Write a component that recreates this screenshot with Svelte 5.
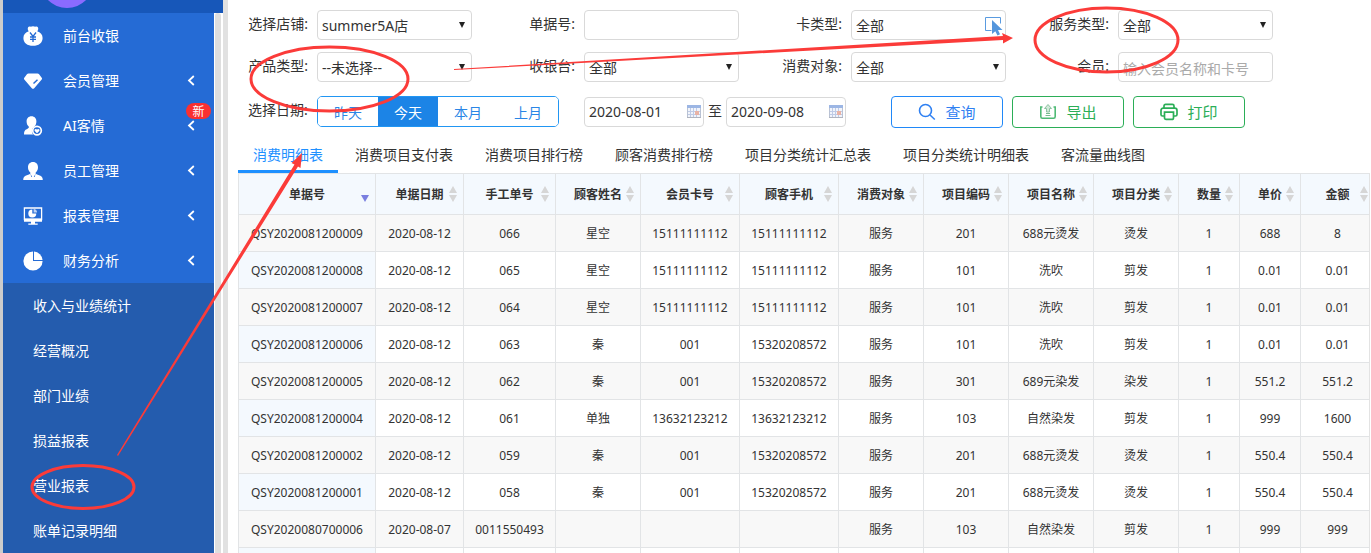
<script>
  const menu = [
    { label: '前台收银', icon: 'money', arrow: false },
    { label: '会员管理', icon: 'diamond', arrow: true },
    { label: 'AI客情', icon: 'care', arrow: true, badge: '新' },
    { label: '员工管理', icon: 'staff', arrow: true },
    { label: '报表管理', icon: 'screen', arrow: true },
    { label: '财务分析', icon: 'pie', arrow: true }
  ];
  const submenu = ['收入与业绩统计', '经营概况', '部门业绩', '损益报表', '营业报表', '账单记录明细'];

  const filters = [
    { id: 'shop', label: '选择店铺:', type: 'select', value: 'summer5A店' },
    { id: 'bill', label: '单据号:', type: 'text', placeholder: '' },
    { id: 'card', label: '卡类型:', type: 'select', value: '全部', pointer: true },
    { id: 'service', label: '服务类型:', type: 'select', value: '全部' },
    { id: 'product', label: '产品类型:', type: 'select', value: '--未选择--' },
    { id: 'cashier', label: '收银台:', type: 'select', value: '全部' },
    { id: 'target', label: '消费对象:', type: 'select', value: '全部' },
    { id: 'member', label: '会员:', type: 'text', placeholder: '输入会员名称和卡号' }
  ];

  const ranges = ['昨天', '今天', '本月', '上月'];
  let range = $state('今天');

  const tabs = ['消费明细表', '消费项目支付表', '消费项目排行榜', '顾客消费排行榜', '项目分类统计汇总表', '项目分类统计明细表', '客流量曲线图'];
  let tab = $state('消费明细表');

  const columns = [
    ['单据号', 137], ['单据日期', 88], ['手工单号', 92], ['顾客姓名', 85], ['会员卡号', 99], ['顾客手机', 99], ['消费对象', 85],
    ['项目编码', 85], ['项目名称', 85], ['项目分类', 85], ['数量', 61], ['单价', 61], ['金额', 74]
  ];
  const rows = [
    ['QSY2020081200009', '2020-08-12', '066', '星空', '15111111112', '15111111112', '服务', '201', '688元烫发', '烫发', '1', '688', '8'],
    ['QSY2020081200008', '2020-08-12', '065', '星空', '15111111112', '15111111112', '服务', '101', '洗吹', '剪发', '1', '0.01', '0.01'],
    ['QSY2020081200007', '2020-08-12', '064', '星空', '15111111112', '15111111112', '服务', '101', '洗吹', '剪发', '1', '0.01', '0.01'],
    ['QSY2020081200006', '2020-08-12', '063', '秦', '001', '15320208572', '服务', '101', '洗吹', '剪发', '1', '0.01', '0.01'],
    ['QSY2020081200005', '2020-08-12', '062', '秦', '001', '15320208572', '服务', '301', '689元染发', '染发', '1', '551.2', '551.2'],
    ['QSY2020081200004', '2020-08-12', '061', '单独', '13632123212', '13632123212', '服务', '103', '自然染发', '剪发', '1', '999', '1600'],
    ['QSY2020081200002', '2020-08-12', '059', '秦', '001', '15320208572', '服务', '201', '688元烫发', '烫发', '1', '550.4', '550.4'],
    ['QSY2020081200001', '2020-08-12', '058', '秦', '001', '15320208572', '服务', '201', '688元烫发', '烫发', '1', '550.4', '550.4'],
    ['QSY2020080700006', '2020-08-07', '0011550493', '', '', '', '服务', '103', '自然染发', '剪发', '1', '999', '999'],
    ['', '', '', '', '', '', '', '', '', '', '', '', '']
  ];
</script>

{#snippet menuIcon(name)}
  <svg class="menu-icon" viewBox="0 0 20 20" width="20" height="20" aria-hidden="true">
    {#if name === 'money'}
      <path fill="#fff" d="M5 1.500C5.500.3 6.800.2 7.800.8 9 .1 11 .1 12.200.8c1-.6 2.300-.5 2.800.7.500 1.300.2 2.700-.8 3.800 3.200 1 5.400 3.300 5.400 6.700 0 5-4 7.800-9.600 7.800S.4 17 .4 12c0-3.400 2.200-5.700 5.400-6.700C4.800 4.200 4.500 2.800 5 1.500z" />
      <path fill="none" stroke="#256bd5" stroke-width="1.300" d="m7 6.500 3 4 3-4M10 10.500V16M7 11h6M7 13.300h6" />
    {:else if name === 'diamond'}
      <path fill="#fff" d="M5.500 2.500h9c.7 0 1.200.2 1.600.8l2.600 3.500c.5.700.5 1.200 0 1.800l-7.500 8.600c-.8.800-1.600.8-2.400 0L1.300 8.600c-.5-.6-.5-1.100 0-1.800l2.600-3.500c.4-.6.900-.8 1.600-.8z" />
      <path fill="none" stroke="#256bd5" stroke-width="1.500" d="m10.500 12.500 4-3.700" />
    {:else if name === 'care'}
      <path fill="#fff" d="M8.500.3c3 0 4.900 2.200 4.900 5.200 0 2.200-.8 4-2 5.100-1.300.9-2.500 2.600-2.500 4.400 0 1.500.5 2.700 1.200 3.500H1c0-3 .6-4.700 3.200-5.600 1.600-.6 2-1.500 1.500-2.300C4.400 9.400 3.600 7.700 3.600 5.500c0-3 1.900-5.200 4.900-5.200z" />
      <circle cx="14" cy="14.600" r="4.300" fill="#256bd5" stroke="#fff" stroke-width="1.700" />
      <path fill="#fff" d="M14 17.200 11.700 15c-.8-1.500.9-2.700 2.300-1.400 1.400-1.300 3.100-.1 2.300 1.400z" />
    {:else if name === 'staff'}
      <path fill="#fff" d="M10 1c3.300 0 5 2.300 5 5.300 0 2.300-.9 4.200-2.300 5.200-.5 1.400.6 1.900 2.800 2.600 3 .8 4.200 2 4.300 4.900H.2c.1-2.900 1.300-4.100 4.300-4.900 2.200-.7 3.300-1.200 2.800-2.600C5.900 10.500 5 8.600 5 6.300 5 3.300 6.700 1 10 1z" />
      <path fill="#256bd5" d="m7.300 12.600 1.900 3.400-.9-.1zM12.700 12.600 10.800 16l.9-.1z" />
    {:else if name === 'screen'}
      <path fill="none" stroke="#fff" stroke-width="1.300" d="M1.400 2h17.200v11.500H1.400z" />
      <path fill="#fff" d="M1 12.400h18v3.300H1zM8 15.700h4v1.800h2.700v1.300H5.300v-1.300H8zM9.300 3.600v4h4a4 4 0 1 1-4-4z" />
      <path fill="#fff" d="M10.600 3a3.800 3.800 0 0 1 3.500 3.500h-3.500z" opacity=".7" />
    {:else}
      <path fill="#fff" d="M10 .4a9.600 9.600 0 1 0 9.600 9.600H10z" />
      <path fill="#fff" d="M11 .4a9.500 9.500 0 0 1 8.600 8.600H11z" />
    {/if}
  </svg>
{/snippet}

{#snippet calendar()}
  <svg class="cal" viewBox="0 0 14 13" width="14" height="13" aria-hidden="true">
    <rect x=".5" y=".5" width="13" height="12" fill="#f1f4fb" stroke="#b9c2d4" />
    <path fill="#9cb6e4" d="M0 0h14v3H0z" />
    <path stroke="#bfcbe6" fill="none" d="M3.500 3v9M6.500 3v9M9.500 3v9M1 6.500h12M1 9.500h12" />
    <path fill="#e9b3a6" d="M8 6h4v4H8z" />
    <path fill="#b0b4bf" d="M0 12h14v1H0z" />
  </svg>
{/snippet}

<div class="app">
  <aside class="side">
    <header class="side-top"><span class="avatar"></span></header>
    <div class="side-body">
      <nav>
        <ul class="menu">
          {#each menu as item}
            <li>
              <a href="#menu">
                {@render menuIcon(item.icon)}
                <span>{item.label}</span>
                {#if item.arrow}
                  <svg class="chev" viewBox="0 0 8 12" width="8" height="12" aria-hidden="true"><path fill="none" stroke="#fff" stroke-width="1.800" d="M6.800 1 2 5.500 6.800 10" /></svg>
                {/if}
              </a>
              {#if item.badge}<span class="badge">{item.badge}</span>{/if}
            </li>
          {/each}
        </ul>
        <ul class="submenu">
          {#each submenu as label}
            <li><a href="#sub">{label}</a></li>
          {/each}
        </ul>
      </nav>
      <div class="track"></div>
    </div>
  </aside>

  <main>
    <form class="filters" onsubmit={(e) => e.preventDefault()}>
      {#each filters as f}
        <div class="field">
          <label for={f.id}>{f.label}</label>
          <div class="control">
            {#if f.type === 'select'}
              <select id={f.id}><option>{f.value}</option></select>
              {#if f.pointer}
                <svg class="pointer" viewBox="0 0 18 19" width="18" height="19" aria-hidden="true">
                  <path fill="none" stroke="#5a9be0" d="M6.500 13.500h-6V.5h15v6" />
                  <path fill="#5596dc" d="M7 3v14l3.300-2.800 2.200 4.300 2.500-1.200-2-4.200H17.500z" />
                </svg>
              {:else}
                <svg class="caret" viewBox="0 0 6 6" width="6" height="6" aria-hidden="true"><path fill="#222" d="M0 0h6L3 6z" /></svg>
              {/if}
            {:else}
              <input id={f.id} type="text" placeholder={f.placeholder} />
            {/if}
          </div>
        </div>
      {/each}
    </form>

    <div class="actions">
      <span class="lead">选择日期:</span>
      <div class="seg">
        {#each ranges as r}
          <button type="button" class:on={range === r} onclick={() => (range = r)}>{r}</button>
        {/each}
      </div>
      <div class="dates">
        <div class="date"><input type="text" aria-label="开始日期" value="2020-08-01" />{@render calendar()}</div>
        <span>至</span>
        <div class="date"><input type="text" aria-label="结束日期" value="2020-09-08" />{@render calendar()}</div>
      </div>
      <div class="buttons">
        <button type="button" class="blue">
          <svg viewBox="0 0 18 18" width="18" height="18" aria-hidden="true"><g fill="none" stroke="#2f80f2" stroke-width="1.600"><circle cx="7.500" cy="7.500" r="6" /><path d="m12 12 4.800 4.500" /></g></svg>
          查询
        </button>
        <button type="button">
          <svg viewBox="0 0 18 18" width="18" height="18" aria-hidden="true"><path fill="none" stroke="#4fba75" stroke-width="1.600" d="M3.500 4H1.800v9.500c0 1 .6 1.700 1.600 1.700h11.200c1 0 1.600-.7 1.600-1.700V4h-1.700" /><path fill="#d3e8da" stroke="#8dc4a1" d="M9 1.500 5.500 5.500h2V9h3V5.500h2z" /><path stroke="#74bd8f" d="M7 10.500h4M6.500 12.500h5" /></svg>
          导出
        </button>
        <button type="button">
          <svg viewBox="0 0 18 18" width="18" height="18" aria-hidden="true"><g fill="none" stroke="#2bae57" stroke-width="1.700"><path d="M4 5V3c0-1 .6-1.600 1.600-1.600h6.800c1 0 1.600.6 1.600 1.600v2" /><path d="M4 13H2.500C1.500 13 1 12.500 1 11.500V7.500C1 6 1.800 5.200 3.300 5.200h11.400c1.500 0 2.300.8 2.300 2.300v4c0 1-.5 1.500-1.500 1.500H14" /><path d="M4.500 9.200h9v5.500c0 1-.6 1.700-1.600 1.700H6.100c-1 0-1.600-.7-1.600-1.700z" /></g></svg>
          打印
        </button>
      </div>
    </div>

    <div class="tabs" role="tablist">
      {#each tabs as t}
        <button type="button" role="tab" aria-selected={tab === t} class:on={tab === t} onclick={() => (tab = t)}>{t}</button>
      {/each}
    </div>

    <div class="grid">
      <table>
        <colgroup>
          {#each columns as c}<col style="width: {c[1]}px" />{/each}
        </colgroup>
        <thead>
          <tr>
            {#each columns as c, i}
              <th scope="col">
                {c[0]}
                <svg class="sort" viewBox="0 0 8 16" width="8" height="16" aria-hidden="true">
                  {#if i === 0}
                    <path fill="#7a7fe0" d="M0 9h8l-4 7z" />
                  {:else}
                    <path fill="#d6d6d6" d="M4 0l4 7H0zM0 9h8l-4 7z" />
                  {/if}
                </svg>
              </th>
            {/each}
          </tr>
        </thead>
        <tbody>
          {#each rows as r}
            <tr>{#each r as v}<td>{v}</td>{/each}</tr>
          {/each}
        </tbody>
      </table>
    </div>
  </main>

  <svg class="marks" viewBox="0 0 1371 553" width="1371" height="553" aria-hidden="true">
    <g fill="none" stroke="#fb3b39" stroke-width="3">
      <ellipse cx="83" cy="487" rx="51" ry="21.500" />
      <ellipse cx="329.500" cy="79" rx="78.500" ry="32" />
      <ellipse cx="1106.500" cy="40" rx="71.500" ry="32" />
    </g>
    <g fill="#fb3b39">
      <path d="M454 69 1003 36 1002 33 1013 38 1003 43.500 1003 40 454 70z" />
      <path d="M117 455 294.500 164.500 291.500 163 302 153 300.500 168 298 166.500 118 456z" />
    </g>
  </svg>
</div>

<style>
  :global(body) {
    background: #fff;
  }
  .app {
    position: relative;
    display: flex;
    height: 100vh;
    overflow: hidden;
    font: 14px/20px 'Noto Sans', 'Noto Sans CJK SC', sans-serif;
    color: #333;
  }
  .app * {
    box-sizing: border-box;
  }
  button,
  input,
  select {
    font: inherit;
    color: inherit;
    margin: 0;
  }
  ul {
    list-style: none;
    margin: 0;
    padding: 0;
  }
  .side {
    flex: none;
    width: 228px;
    display: flex;
    flex-direction: column;
    border-left: 3px solid #ccc;
    border-right: 5px solid #e1e1e1;
  }
  .side-top {
    flex: none;
    height: 13px;
    background: #1757b9;
    overflow: hidden;
    display: flex;
    align-items: flex-end;
    padding: 0 0 5px 37px;
  }
  .avatar {
    flex: none;
    width: 54px;
    height: 54px;
    border-radius: 50%;
    background: #8a6bff;
  }
  .side-body {
    flex: 1;
    min-height: 0;
    display: flex;
    padding-right: 2px;
  }
  nav {
    flex: 1;
    display: flex;
    flex-direction: column;
    background: #245cae;
    overflow: hidden;
  }
  .track {
    width: 7px;
    border-left: 1px solid #fff;
    border-radius: 3px 3px 0 0;
    background: #dedede;
  }
  .menu {
    background: #256bd5;
  }
  .menu li {
    position: relative;
  }
  nav a {
    display: flex;
    align-items: center;
    height: 45px;
    color: #fff;
    text-decoration: none;
  }
  .menu a {
    gap: 20px;
    padding: 0 19px 0 20px;
  }
  .submenu a {
    padding-left: 30px;
  }
  .chev {
    margin-left: auto;
  }
  .badge {
    position: absolute;
    top: 0;
    right: 3px;
    width: 25px;
    height: 16px;
    border-radius: 8px;
    background: #fb3030;
    color: #fff;
    font-size: 12px;
    line-height: 17px;
    text-align: center;
  }
  main {
    flex: 1;
    min-width: 0;
    padding: 10px 0 0 10px;
    display: flex;
    flex-direction: column;
  }
  .filters {
    display: grid;
    grid-template-columns: 234px repeat(3, 267px);
    row-gap: 12px;
  }
  .field {
    display: flex;
    justify-content: flex-end;
    gap: 9px;
  }
  .field label {
    line-height: 28px;
  }
  .control {
    position: relative;
    width: 155px;
    height: 30px;
  }
  .control input,
  .control select,
  .date input {
    appearance: none;
    width: 100%;
    height: 30px;
    border: 1px solid #d9d9d9;
    border-radius: 4px;
    background: #fff;
    padding: 2px 4px 0;
    outline: none;
  }
  .control input::placeholder {
    color: #aaa;
  }
  .caret {
    position: absolute;
    right: 7px;
    top: 12px;
  }
  .pointer {
    position: absolute;
    right: 3px;
    top: 7px;
  }
  .actions {
    display: flex;
    align-items: flex-start;
    height: 32px;
    margin-top: 14px;
    padding-left: 10px;
  }
  .lead {
    width: 69px;
    padding-top: 4px;
  }
  .seg {
    display: flex;
    width: 242px;
    height: 31px;
    border: 1px solid #2196f3;
    border-radius: 5px;
    overflow: hidden;
  }
  .seg button {
    flex: 1;
    border: 0;
    padding: 2px 0 0;
    background: #fff;
    color: #2a86e6;
  }
  .seg button.on {
    background: #1c84e6;
    color: #fff;
  }
  .dates {
    display: flex;
    gap: 4px;
    margin-left: 25px;
    line-height: 30px;
  }
  .date {
    position: relative;
    width: 120px;
    padding-top: 1px;
  }
  .date input {
    display: block;
    padding: 0 4px;
  }
  .cal {
    position: absolute;
    right: 3px;
    top: 9px;
  }
  .buttons {
    display: flex;
    gap: 9px;
    margin-left: 45px;
  }
  .buttons button {
    display: flex;
    align-items: center;
    justify-content: center;
    gap: 9px;
    width: 112px;
    height: 32px;
    border: 1px solid #2bae57;
    border-radius: 4px;
    background: #fff;
    color: #2bae57;
    font-size: 15px;
    padding: 0;
  }
  .buttons .blue {
    border-color: #2088f8;
    color: #2f80f2;
  }
  .tabs {
    display: flex;
    gap: 2px;
    margin-top: 10px;
  }
  .tabs button {
    border: 0;
    border-bottom: 3px solid transparent;
    background: none;
    padding: 8px 15px 7px;
    line-height: 17px;
    white-space: nowrap;
  }
  .tabs button.on {
    border-color: #1e90ff;
    color: #1e90ff;
  }
  .grid {
    flex: 1;
    min-height: 0;
    margin-right: 1px;
    border-right: 1px solid #e3e3e3;
    overflow: hidden;
  }
  table {
    table-layout: fixed;
    width: 1137px;
    border-collapse: separate;
    border-spacing: 0;
    border-left: 1px solid #e2e4e6;
    border-top: 1px solid #e2e4e6;
    font-size: 12px;
    line-height: 16px;
  }
  th,
  td {
    border-right: 1px solid #e2e4e6;
    border-bottom: 1px solid #e2e4e6;
    padding: 2px 0 0;
    text-align: center;
    white-space: nowrap;
  }
  th {
    position: relative;
    height: 41px;
    background: #f4f9fe;
  }
  td {
    height: 37px;
  }
  tbody tr:nth-child(odd) {
    background: #f8f8f8;
  }
  tbody tr:nth-child(even) td:first-child {
    background: #f4f9fe;
  }
  .sort {
    position: absolute;
    right: 6px;
    top: 12px;
  }
  .marks {
    position: absolute;
    left: 0;
    top: 0;
    pointer-events: none;
  }
</style>
